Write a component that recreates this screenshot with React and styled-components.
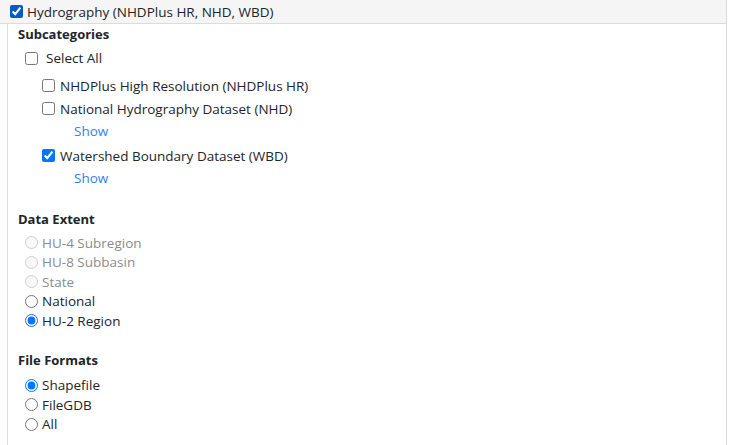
import React from 'react';
import styled, { createGlobalStyle } from 'styled-components';

const GlobalStyle = createGlobalStyle`
  body {
    margin: 0;
    background: #fff;
    font-family: "Open Sans", "Noto Sans", sans-serif;
    font-size: 13.5px;
    color: #212529;
  }
`;

const Panel = styled.div`
  width: 727px;
  height: 445px;
  border-right: 1px solid #d9d9d9;
  display: flex;
  flex-direction: column;
  box-sizing: border-box;
  overflow: hidden;
`;

const Header = styled.label`
  display: flex;
  align-items: center;
  height: 24px;
  padding-left: 10px;
  background: #f5f5f5;
  border-bottom: 1px solid #dcdcdc;
  box-sizing: border-box;
`;

const Body = styled.div`
  flex: 1;
  margin-left: 7px;
  border-left: 1px solid #dcdcdc;
  padding-left: 10px;
`;

const SectionTitle = styled.div`
  font-weight: 700;
  font-size: 13px;
  line-height: 20px;
  margin-top: ${p => p.$top || 0}px;
`;

const Box = styled.input`
  width: 13px;
  height: 13px;
  margin: 0 ${p => p.$gap || 4}px 0 0;
  flex-shrink: 0;
`;

const Row = styled.label`
  display: flex;
  align-items: center;
  height: ${p => p.$h || 23}px;
  padding-left: ${p => p.$indent || 0}px;
  margin-bottom: ${p => p.$after || 0}px;
  color: ${p => (p.$disabled ? '#8c8c8c' : '#212529')};
`;

const ShowLink = styled.a`
  display: block;
  padding-left: 56px;
  height: 24px;
  line-height: 22px;
  color: #3580e6;
  text-decoration: none;
  cursor: pointer;
`;

const RadioList = styled.div`
  display: flex;
  flex-direction: column;
  padding-left: 7px;
  margin-top: ${p => p.$top || 0}px;
`;

const extents = [
  { label: 'HU-4 Subregion', disabled: true },
  { label: 'HU-8 Subbasin', disabled: true },
  { label: 'State', disabled: true },
  { label: 'National' },
  { label: 'HU-2 Region', checked: true },
];

const formats = [
  { label: 'Shapefile', checked: true },
  { label: 'FileGDB' },
  { label: 'All' },
];

export default function App() {
  return (
    <>
      <GlobalStyle />
      <Panel>
        <Header>
          <Box type="checkbox" defaultChecked $gap={4} />
          Hydrography (NHDPlus HR, NHD, WBD)
        </Header>
        <Body>
          <SectionTitle>Subcategories</SectionTitle>
          <Row $indent={7} $h={28} $after={2}>
            <Box type="checkbox" $gap={8} />
            Select All
          </Row>
          <Row $indent={24}>
            <Box type="checkbox" $gap={5} />
            NHDPlus High Resolution (NHDPlus HR)
          </Row>
          <Row $indent={24}>
            <Box type="checkbox" $gap={5} />
            National Hydrography Dataset (NHD)
          </Row>
          <ShowLink>Show</ShowLink>
          <Row $indent={24}>
            <Box type="checkbox" defaultChecked $gap={5} />
            Watershed Boundary Dataset (WBD)
          </Row>
          <ShowLink>Show</ShowLink>

          <SectionTitle $top={18}>Data Extent</SectionTitle>
          <RadioList $top={4}>
            {extents.map(e => (
              <Row key={e.label} $h={19.5} $disabled={e.disabled}>
                <Box type="radio" name="extent" defaultChecked={e.checked} disabled={e.disabled} $gap={4} />
                {e.label}
              </Row>
            ))}
          </RadioList>

          <SectionTitle $top={19.5}>File Formats</SectionTitle>
          <RadioList $top={5.5}>
            {formats.map(f => (
              <Row key={f.label} $h={19.5}>
                <Box type="radio" name="format" defaultChecked={f.checked} $gap={4} />
                {f.label}
              </Row>
            ))}
          </RadioList>
        </Body>
      </Panel>
    </>
  );
}
